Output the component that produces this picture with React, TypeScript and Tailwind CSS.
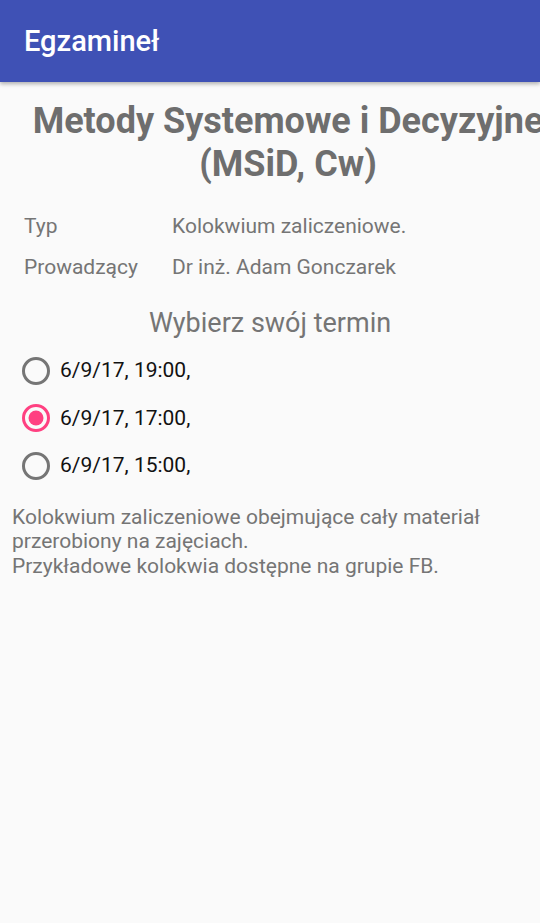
import React from "react";

const Radio = ({ checked }: { checked: boolean }) => (
  <svg width="30" height="30" viewBox="0 0 30 30" className="shrink-0">
    <circle cx="15" cy="15" r="12.5" fill="none" stroke={checked ? "#FF4081" : "#757575"} strokeWidth="3" />
    {checked && <circle cx="15" cy="15" r="7.5" fill="#FF4081" />}
  </svg>
);

export default function App() {
  const options = [
    { label: "6/9/17, 19:00,", checked: false },
    { label: "6/9/17, 17:00,", checked: true },
    { label: "6/9/17, 15:00,", checked: false },
  ];
  return (
    <div className="w-[540px] h-[923px] bg-[#FAFAFA] overflow-hidden relative" style={{ fontFamily: "Roboto, 'Noto Sans', sans-serif" }}>
      <div className="h-[82px] bg-[#3F51B5] flex items-center pl-[24px] pt-[2px] shadow-[0_2px_4px_rgba(0,0,0,0.3)] relative z-10">
        <span className="text-white text-[29px] font-medium">Egzamineł</span>
      </div>
      <div className="w-[576px] text-center font-bold text-[#6E6E6E] text-[36px] leading-[43px] mt-[18px] whitespace-nowrap">
        <div>Metody Systemowe i Decyzyjne</div>
        <div>(MSiD, Cw)</div>
      </div>
      <div className="mt-[20px] pl-[24px] text-[21px] text-[#757575]">
        <div className="flex h-[41px] items-center">
          <span className="w-[148px]">Typ</span>
          <span>Kolokwium zaliczeniowe.</span>
        </div>
        <div className="flex h-[41px] items-center">
          <span className="w-[148px]">Prowadzący</span>
          <span>Dr inż. Adam Gonczarek</span>
        </div>
      </div>
      <div className="mt-[18px] text-center text-[27px] text-[#757575] leading-[34px]">Wybierz swój termin</div>
      <div className="mt-[7px] pl-[21px] flex flex-col">
        {options.map((o) => (
          <div key={o.label} className="flex items-center h-[47.5px] gap-[9px]">
            <Radio checked={o.checked} />
            <span className="text-[21px] text-[#111]">{o.label}</span>
          </div>
        ))}
      </div>
      <div className="mt-[15px] px-[12px] text-[21px] leading-[24.5px] text-[#757575]">
        Kolokwium zaliczeniowe obejmujące cały materiał przerobiony na zajęciach.
        <br />
        Przykładowe kolokwia dostępne na grupie FB.
      </div>
    </div>
  );
}
